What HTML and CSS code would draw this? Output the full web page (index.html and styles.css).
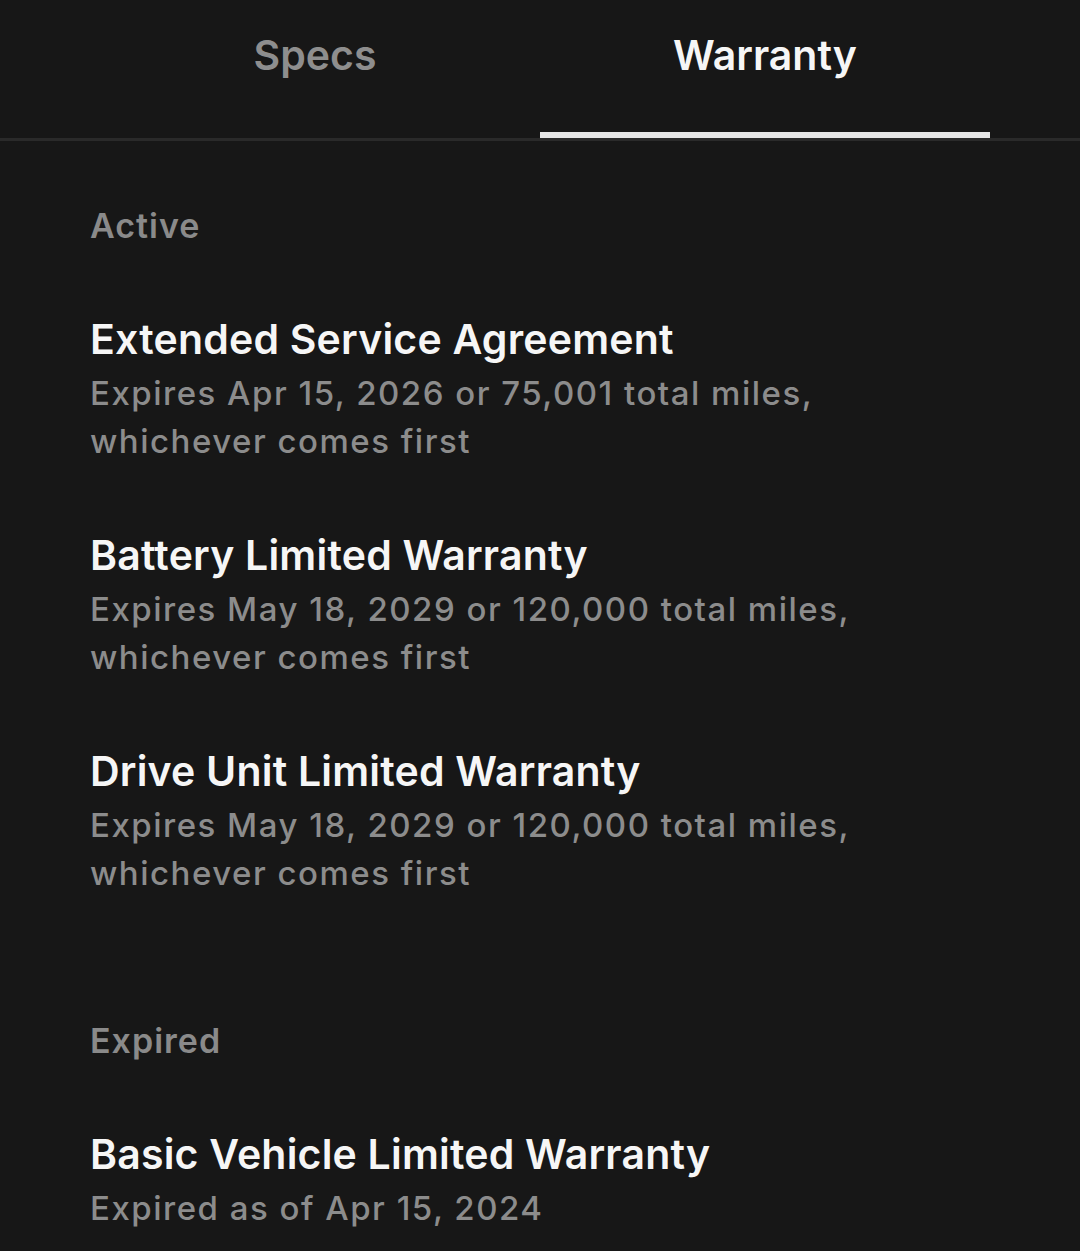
FILE: index.html
```html
<!DOCTYPE html>
<html lang="en">
<head>
    <meta charset="UTF-8">
    <meta name="viewport" content="width=device-width, initial-scale=1.0">
    <title>Warranty</title>
    <link rel="stylesheet" href="styles.css">
</head>
<body>
    <nav class="tabs">
        <a href="#" class="tab">Specs</a>
        <a href="#" class="tab tab-active">Warranty</a>
    </nav>

    <main class="warranty">
        <section class="warranty-group">
            <h2 class="group-label">Active</h2>
            <ul class="warranty-list">
                <li class="warranty-item">
                    <h3>Extended Service Agreement</h3>
                    <p>Expires Apr 15, 2026 or 75,001 total miles,<br>whichever comes first</p>
                </li>
                <li class="warranty-item">
                    <h3>Battery Limited Warranty</h3>
                    <p>Expires May 18, 2029 or 120,000 total miles,<br>whichever comes first</p>
                </li>
                <li class="warranty-item">
                    <h3>Drive Unit Limited Warranty</h3>
                    <p>Expires May 18, 2029 or 120,000 total miles,<br>whichever comes first</p>
                </li>
            </ul>
        </section>

        <section class="warranty-group">
            <h2 class="group-label">Expired</h2>
            <ul class="warranty-list">
                <li class="warranty-item">
                    <h3>Basic Vehicle Limited Warranty</h3>
                    <p>Expired as of Apr 15, 2024</p>
                </li>
            </ul>
        </section>
    </main>
</body>
</html>
```

FILE: styles.css
```css
body {
    font-family: Inter, "Noto Sans", sans-serif;
    margin: 0;
    padding: 0;
    background-color: #171717;
    color: #f4f4f4;
    overflow: hidden;
}

.tabs {
    display: flex;
    padding: 0 90px;
    border-bottom: 3px solid #2a2a2a;
}

.tab {
    flex: 1;
    text-align: center;
    padding: 30px 0 52px;
    font-size: 41px;
    line-height: 50px;
    font-weight: 600;
    color: #8e8e8e;
    text-decoration: none;
    border-bottom: 6px solid transparent;
}

.tab-active {
    color: #f6f6f6;
    border-bottom-color: #e6e6e6;
}

.warranty {
    padding: 63px 90px 0;
    display: flex;
    flex-direction: column;
    gap: 122px;
}

.group-label {
    margin: 0 0 65px;
    font-size: 34px;
    line-height: 44px;
    font-weight: 600;
    letter-spacing: 1px;
    color: #8a8a8a;
}

.warranty-list {
    list-style: none;
    margin: 0;
    padding: 0;
    display: flex;
    flex-direction: column;
    gap: 64px;
}

.warranty-item h3 {
    margin: 0;
    font-size: 41px;
    line-height: 52px;
    font-weight: 600;
    letter-spacing: 0.2px;
    color: #f6f6f6;
}

.warranty-item p {
    margin: 4px 0 0;
    font-size: 33px;
    line-height: 48px;
    font-weight: 500;
    letter-spacing: 1.5px;
    color: #8c8c8c;
}
```
